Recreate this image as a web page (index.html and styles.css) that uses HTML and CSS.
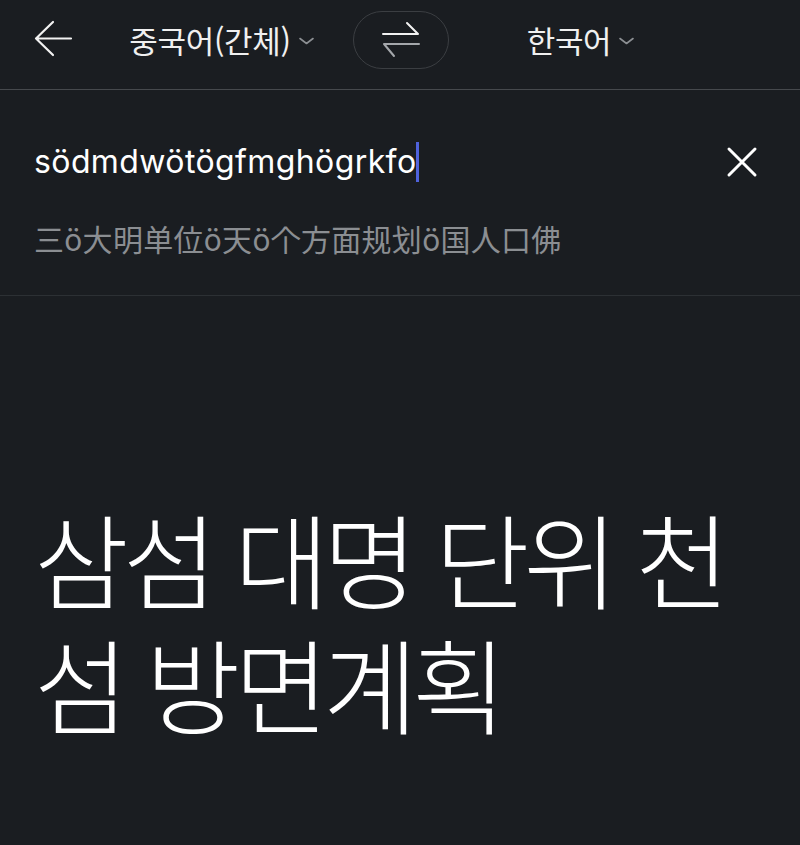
FILE: index.html
```html
<!DOCTYPE html>
<html lang="ko">
<head>
<meta charset="utf-8">
<title>번역</title>
<link rel="stylesheet" href="styles.css">
</head>
<body>
<div class="app">
  <header class="topbar">
    <button class="icon-btn back" aria-label="뒤로">
      <svg width="40" height="40" viewBox="0 0 40 40"><path d="M19 2 L2 18.5 L19 35 M2 18.5 H37" fill="none" stroke="#f2f2f2" stroke-width="2.2" stroke-linecap="round" stroke-linejoin="round"/></svg>
    </button>
    <div class="lang">
      <span class="lang-name">중국어(간체)</span>
      <svg class="chev" width="15" height="8" viewBox="0 0 15 8"><path d="M1 1.5 L7.5 6.5 L14 1.5" fill="none" stroke="#8c8f93" stroke-width="1.6" stroke-linecap="round" stroke-linejoin="round"/></svg>
    </div>
    <button class="swap" aria-label="언어 바꾸기">
      <svg width="40" height="38" viewBox="0 0 40 38"><path d="M2 13 H37 L26 2" fill="none" stroke="#f2f2f2" stroke-width="2" stroke-linecap="round" stroke-linejoin="round"/><path d="M38 23 H3 L13 35" fill="none" stroke="#a4a7ab" stroke-width="2" stroke-linecap="round" stroke-linejoin="round"/></svg>
    </button>
    <div class="lang">
      <span class="lang-name">한국어</span>
      <svg class="chev" width="15" height="8" viewBox="0 0 15 8"><path d="M1 1.5 L7.5 6.5 L14 1.5" fill="none" stroke="#8c8f93" stroke-width="1.6" stroke-linecap="round" stroke-linejoin="round"/></svg>
    </div>
    <div class="spacer"></div>
  </header>

  <section class="source">
    <div class="input-row">
      <div class="input-text">södmdwötögfmghögrkfo<span class="caret"></span></div>
      <button class="icon-btn clear" aria-label="지우기">
        <svg width="32" height="32" viewBox="0 0 32 32"><path d="M3 3 L29 29 M29 3 L3 29" fill="none" stroke="#ffffff" stroke-width="3" stroke-linecap="round"/></svg>
      </button>
    </div>
    <div class="romanized">三ö大明单位ö天ö个方面规划ö国人口佛</div>
  </section>

  <section class="result">
    <p class="result-line">삼섬 대명 단위 천</p>
    <p class="result-line">섬 방면계획</p>
  </section>
</div>
</body>
</html>
```

FILE: styles.css
```css
html, body {
  margin: 0;
  padding: 0;
  background: #1a1d21;
}

body {
  width: 800px;
  height: 845px;
  overflow: hidden;
  font-family: "Inter", "Noto Sans CJK KR", "Noto Sans CJK SC", sans-serif;
  color: #f2f2f2;
}

.app {
  display: flex;
  flex-direction: column;
}

button {
  background: none;
  border: 0;
  padding: 0;
  margin: 0;
  color: inherit;
  font: inherit;
  cursor: pointer;
}

.topbar {
  display: grid;
  grid-template-columns: 90px 1fr 96px 1fr 88px;
  align-items: center;
  height: 90px;
  padding-bottom: 9px;
  box-sizing: border-box;
  border-bottom: 1px solid #46494d;
}

.icon-btn {
  display: flex;
  align-items: center;
  justify-content: center;
}

.back {
  justify-content: flex-start;
  padding-left: 34px;
  height: 40px;
}

.lang {
  display: flex;
  align-items: center;
  justify-content: center;
  gap: 8px;
}

.lang-name {
  font-family: "Noto Sans CJK KR", sans-serif;
  font-size: 31px;
  line-height: 40px;
  color: #f0f0f0;
  letter-spacing: -0.3px;
}

.chev {
  margin-top: 2px;
}

.swap {
  display: flex;
  align-items: center;
  justify-content: center;
  width: 96px;
  height: 58px;
  border: 1.5px solid #3b3e42;
  border-radius: 29px;
  box-sizing: border-box;
}

.source {
  padding: 50px 0 37px 34px;
  border-bottom: 1px solid #2c3034;
}

.input-row {
  display: flex;
  align-items: center;
  justify-content: space-between;
  height: 44px;
  padding-right: 42px;
}

.input-text {
  display: flex;
  align-items: center;
  font-size: 32px;
  line-height: 44px;
  color: #ffffff;
  letter-spacing: 0.4px;
}

.caret {
  display: inline-block;
  width: 3px;
  height: 40px;
  background: #4f62dc;
  margin-left: -1px;
}

.clear {
  width: 32px;
  height: 32px;
}

.romanized {
  margin-top: 38px;
  font-family: "Inter", "Noto Sans CJK SC", sans-serif;
  font-size: 30px;
  line-height: 36px;
  color: #8b8e92;
  letter-spacing: 0.3px;
}

.result {
  padding: 199px 20px 0 34px;
}

.result-line {
  margin: 0;
  font-family: "Noto Sans CJK KR", sans-serif;
  font-weight: 300;
  font-size: 103px;
  line-height: 125px;
  height: 125px;
  color: #ffffff;
  letter-spacing: -6px;
  white-space: nowrap;
}
```
